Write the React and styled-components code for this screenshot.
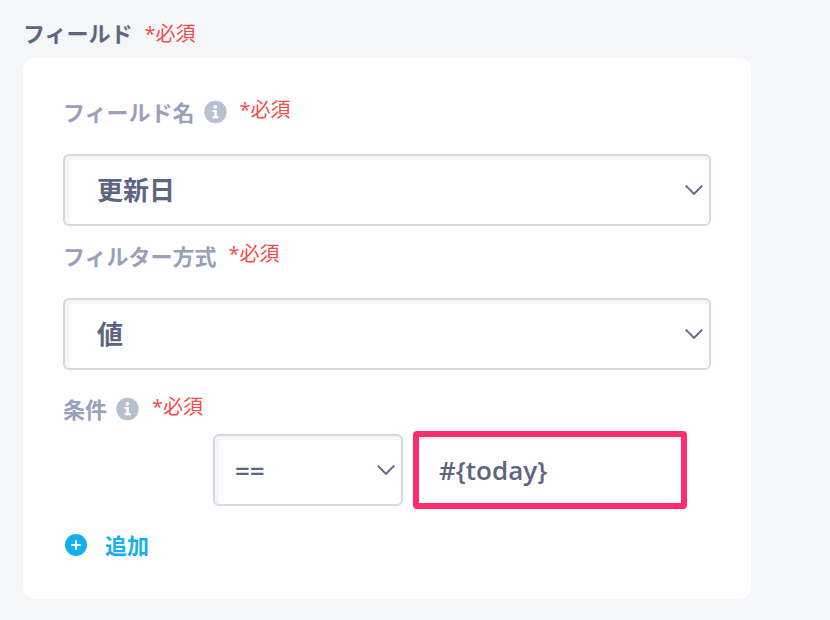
import React, { useState } from 'react';
import styled, { createGlobalStyle, ThemeProvider } from 'styled-components';

const theme = {
  background: '#f4f6f8',
  textColor: '#5d6581',
  labelColor: '#98a0ba',
  iconColor: '#b7bfd0',
  borderColor: '#d3d9e4',
  errorColor: '#f84a4a',
  primaryColor: '#15b0ea',
  highlightColor: '#ff2d6b',
};

const GlobalStyle = createGlobalStyle`
  * {
    box-sizing: border-box;
  }

  body {
    margin: 0;
    background: ${theme.background};
    font-family: 'Open Sans', 'Noto Sans CJK JP', sans-serif;
  }
`;

const PageStyled = styled.main`
  padding: 20px 79px 20px 23px;
`;

const TitleRowStyled = styled.div`
  display: flex;
  align-items: flex-end;
  gap: 12px;
  margin-bottom: 12px;
`;

const TitleStyled = styled.h1`
  margin: 0;
  color: ${({ theme }) => theme.textColor};
  font-size: 22px;
  font-weight: 700;
  line-height: 26px;
`;

const CardStyled = styled.form`
  padding: 40px;
  border-radius: 12px;
  background: white;
`;

const FieldStyled = styled.div`
  margin-bottom: ${({ $space }) => $space}px;
`;

const LabelRowStyled = styled.div`
  display: flex;
  align-items: flex-start;
  gap: 12px;
  margin-bottom: ${({ $tight }) => ($tight ? 8 : 28)}px;
`;

const LabelStyled = styled.label`
  display: flex;
  align-items: center;
  gap: 9px;
  color: ${({ theme }) => theme.labelColor};
  font-size: 22px;
  font-weight: 700;
  line-height: 28px;
`;

const RequiredStyled = styled.span`
  color: ${({ theme }) => theme.errorColor};
  font-size: 20px;
  line-height: 24px;
`;

const SelectWrapperStyled = styled.div`
  position: relative;
`;

const SelectStyled = styled.select`
  display: block;
  width: 100%;
  height: 72px;
  margin: 0;
  padding: 0 40px 0 ${({ $compact }) => ($compact ? 20 : 32)}px;
  appearance: none;
  border: 2px solid ${({ theme }) => theme.borderColor};
  border-radius: 6px;
  background: white;
  box-shadow: inset 4px 4px 0 ${({ theme }) => theme.background};
  color: ${({ theme }) => theme.textColor};
  font-family: inherit;
  font-size: 26px;
  font-weight: 600;
`;

const ChevronStyled = styled.svg`
  position: absolute;
  top: 26px;
  right: 7px;
  pointer-events: none;
  color: ${({ theme }) => theme.textColor};
`;

const ConditionStyled = styled.div`
  display: grid;
  grid-template-columns: 190px 1fr;
  align-items: center;
  gap: 10px;
  padding: 0 24px 0 150px;
`;

const InputStyled = styled.input`
  width: 100%;
  height: 78px;
  padding: 0 20px;
  border: 6px solid ${({ theme }) => theme.highlightColor};
  border-radius: 4px;
  outline: none;
  background: white;
  box-shadow: inset 0 3px 0 ${({ theme }) => theme.background};
  color: ${({ theme }) => theme.textColor};
  font-family: inherit;
  font-size: 26px;
  font-weight: 600;
`;

const AddButtonStyled = styled.button`
  display: flex;
  align-items: center;
  gap: 18px;
  margin: 0;
  padding: 0 0 0 2px;
  border: 0;
  background: none;
  color: ${({ theme }) => theme.primaryColor};
  font-family: inherit;
  font-size: 22px;
  font-weight: 700;
  line-height: 28px;
  cursor: pointer;
`;

const InfoIcon = () => (
  <svg width="24" height="24" viewBox="0 0 24 24" aria-hidden="true">
    <circle cx="11.5" cy="12" r="11.2" fill={theme.iconColor} />
    <circle cx="11.3" cy="6.9" r="1.8" fill="white" />
    <path d="M8.4 9.9h4.4v6.3h1.8v2H8.4v-2h1.9v-4.3H8.4z" fill="white" />
  </svg>
);

const PlusIcon = () => (
  <svg width="22" height="22" viewBox="0 0 22 22" aria-hidden="true">
    <circle cx="11" cy="11" r="11" fill="currentColor" />
    <path d="M11 6.2v9.6M6.2 11h9.6" stroke="white" strokeWidth="1.8" />
  </svg>
);

const Required = () => <RequiredStyled>*必須</RequiredStyled>;

const Select = ({ options, value, onChange, ...rest }) => (
  <SelectWrapperStyled>
    <SelectStyled value={value} onChange={(e) => onChange(e.target.value)} {...rest}>
      {options.map((option) => (
        <option key={option}>{option}</option>
      ))}
    </SelectStyled>
    <ChevronStyled width="20" height="20" viewBox="0 0 20 20" aria-hidden="true">
      <path d="M1.8 5.6L10 13.8l8.2-8.2" fill="none" stroke="currentColor" strokeWidth="1.9" />
    </ChevronStyled>
  </SelectWrapperStyled>
);

const App = () => {
  const [form, setForm] = useState({
    field: '更新日',
    method: '値',
    operator: '==',
    value: '#{today}',
  });

  const handleChange = (name) => (value) => {
    setForm({ ...form, [name]: value });
  };

  return (
    <ThemeProvider theme={theme}>
      <GlobalStyle />
      <PageStyled>
        <TitleRowStyled>
          <TitleStyled>フィールド</TitleStyled>
          <Required />
        </TitleRowStyled>
        <CardStyled onSubmit={(e) => e.preventDefault()}>
          <FieldStyled $space={16}>
            <LabelRowStyled>
              <LabelStyled htmlFor="field">
                フィールド名
                <InfoIcon />
              </LabelStyled>
              <Required />
            </LabelRowStyled>
            <Select
              id="field"
              options={['更新日']}
              value={form.field}
              onChange={handleChange('field')}
            />
          </FieldStyled>
          <FieldStyled $space={25}>
            <LabelRowStyled>
              <LabelStyled htmlFor="method">フィルター方式</LabelStyled>
              <Required />
            </LabelRowStyled>
            <Select
              id="method"
              options={['値']}
              value={form.method}
              onChange={handleChange('method')}
            />
          </FieldStyled>
          <FieldStyled $space={22}>
            <LabelRowStyled $tight>
              <LabelStyled htmlFor="value">
                条件
                <InfoIcon />
              </LabelStyled>
              <Required />
            </LabelRowStyled>
            <ConditionStyled>
              <Select
                $compact
                aria-label="条件"
                options={['==']}
                value={form.operator}
                onChange={handleChange('operator')}
              />
              <InputStyled
                id="value"
                type="text"
                value={form.value}
                onChange={(e) => handleChange('value')(e.target.value)}
              />
            </ConditionStyled>
          </FieldStyled>
          <AddButtonStyled type="button">
            <PlusIcon />
            追加
          </AddButtonStyled>
        </CardStyled>
      </PageStyled>
    </ThemeProvider>
  );
};

export default App;
